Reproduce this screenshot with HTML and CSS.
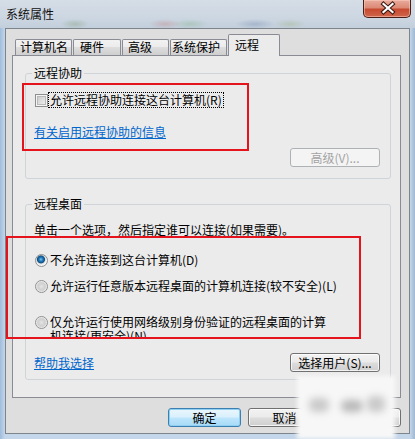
FILE: index.html
```html
<!DOCTYPE html>
<html lang="zh-CN">
<head>
<meta charset="utf-8">
<title>系统属性</title>
<link rel="stylesheet" href="styles.css">
</head>
<body>
<div class="window">
  <div class="titlebar">
    <span class="title">系统属性</span>
    <span class="close">
      <svg width="48" height="18" viewBox="0 0 48 18">
        <path d="M20.5 5 L29.5 13 M29.5 5 L20.5 13" stroke="#3b1610" stroke-width="4.2" stroke-linecap="square" fill="none"/>
        <path d="M20.5 5 L29.5 13 M29.5 5 L20.5 13" stroke="#ffffff" stroke-width="2.2" stroke-linecap="square" fill="none"/>
      </svg>
    </span>
  </div>
  <div class="dialog">
    <div class="tabs">
      <div class="tab t1">计算机名</div>
      <div class="tab t2">硬件</div>
      <div class="tab t3">高级</div>
      <div class="tab t4">系统保护</div>
      <div class="tab active">远程</div>
    </div>
    <div class="panel">
      <fieldset class="group g1">
        <legend>远程协助</legend>
        <div class="check-row"><span class="checkbox"></span><span class="focus">允许远程协助连接这台计算机(R)</span></div>
        <a class="link info-link">有关启用远程协助的信息</a>
        <div class="btn-row"><span class="btn wide disabled">高级(V)...</span></div>
      </fieldset>
      <fieldset class="group g2">
        <legend>远程桌面</legend>
        <p class="hint">单击一个选项，然后指定谁可以连接(如果需要)。</p>
        <div class="radio-row r1"><span class="radio checked"></span><span>不允许连接到这台计算机(D)</span></div>
        <div class="radio-row r2"><span class="radio"></span><span>允许运行任意版本远程桌面的计算机连接(较不安全)(L)</span></div>
        <div class="radio-row r3"><span class="radio"></span><span class="multi">仅允许运行使用网络级别身份验证的远程桌面的计算机连接(更安全)(N)</span></div>
        <div class="btn-row split"><a class="link">帮助我选择</a><span class="btn wide">选择用户(S)...</span></div>
      </fieldset>
    </div>
    <div class="footer">
      <span class="btn default">确定</span>
      <span class="btn cancel">取消</span>
      <span class="btn">应用(A)</span>
    </div>
  </div>
  <div class="highlight h1"></div>
  <div class="highlight h2"></div>
  <div class="watermark"><span class="blob b1"></span><span class="blob b2"></span><span class="blob b3"></span></div>
</div>
</body>
</html>
```
FILE: styles.css
```css
* { box-sizing: border-box; }
html, body { margin: 0; padding: 0; }
body {
  width: 415px;
  height: 439px;
  overflow: hidden;
  font-family: "Noto Sans CJK SC", "Noto Sans", sans-serif;
  font-size: 12px;
  line-height: 14px;
  color: #000;
  background: #b3c9e2;
}
.window {
  position: relative;
  width: 415px;
  height: 439px;
  display: flex;
  flex-direction: column;
  background: linear-gradient(90deg, #9fbcdc 0, #c4d6ea 5px, #c4d6ea 410px, #9fb7d2 415px);
}
.titlebar {
  height: 28px;
  display: flex;
  justify-content: space-between;
  align-items: flex-start;
  padding-left: 6px;
  background:
    radial-gradient(ellipse 14px 5px at 75px 24px, rgba(120,150,110,.35), transparent),
    radial-gradient(ellipse 16px 5px at 165px 24px, rgba(190,110,110,.3), transparent),
    radial-gradient(ellipse 18px 5px at 190px 24px, rgba(120,170,120,.3), transparent),
    radial-gradient(ellipse 20px 5px at 255px 24px, rgba(110,130,170,.35), transparent),
    radial-gradient(ellipse 16px 5px at 290px 24px, rgba(150,170,110,.3), transparent),
    linear-gradient(180deg, #d5dde6 0, #cdd7e2 60%, #c2cfdc 100%);
}
.title { margin-top: 7px; color: #111; }
.close {
  display: block;
  width: 48px;
  height: 18px;
  margin-right: 4px;
  border: 1px solid #4a1d15;
  border-top: none;
  border-radius: 0 0 5px 5px;
  background: linear-gradient(180deg, #e9ab9c 0, #dc8a76 45%, #c64a30 55%, #d0664c 100%);
  box-shadow: inset 0 0 0 1px rgba(255,210,200,.5);
}
.close svg { display: block; margin: -1px 0 0 -1px; }
.dialog {
  margin: 0 5px 5px 5px;
  height: 406px;
  border: 1px solid #7e848b;
  background: #dedede;
  display: flex;
  flex-direction: column;
}
.tabs {
  display: flex;
  align-items: flex-end;
  gap: 1px;
  padding: 5px 0 0 9px;
  height: 26px;
  position: relative;
  z-index: 2;
}
.tab {
  height: 16px;
  border: 1px solid #898c95;
  border-bottom: none;
  border-radius: 2px 2px 0 0;
  background: linear-gradient(180deg, #f2f2f2 0, #ebebeb 50%, #dddddd 50%, #cfcfcf 100%);
  padding-left: 4px;
  white-space: nowrap;
}
.t1 { width: 57px; }
.t2 { width: 48px; padding-left: 6px; }
.t3 { width: 47px; padding-left: 5px; }
.t4 { width: 57px; padding-left: 1px; }
.tab.active {
  width: 52px;
  height: 22px;
  margin-bottom: -1px;
  padding: 3px 0 0 6px;
  background: #ebebeb;
}
.panel {
  height: 343px;
  margin: 0 8px 0 6px;
  border: 1px solid #898c95;
  background: #ebebeb;
}
.group {
  width: 366px;
  margin: 10px 0 0 12px;
  padding: 0 10px 11px 8px;
  border: 1px solid #cfd4d8;
  border-radius: 3px;
  min-width: 0;
}
.group legend {
  margin-left: -2px;
  padding: 0 2px;
  line-height: 14px;
}
.g2 { margin-top: 18px; padding-bottom: 7px; }
.check-row {
  display: flex;
  align-items: center;
  height: 14px;
  margin-top: 13px;
}
.checkbox {
  width: 13px;
  height: 13px;
  margin: 0 1px 0 1px;
  border: 1px solid #8e8f8f;
  background: linear-gradient(135deg, #c4c4c4 0, #e2e2e2 60%, #f3f3f3 100%);
  box-shadow: inset 0 0 0 1px #f4f4f4, inset 0 0 0 2px #b9b9b9;
}
.focus {
  outline: 1px dotted #000;
  outline-offset: 0;
  padding: 0 1px;
  line-height: 14px;
}
.link {
  display: block;
  width: fit-content;
  color: #0066cc;
  text-decoration: underline;
  cursor: pointer;
}
.info-link { margin-top: 18px; }
.btn-row {
  display: flex;
  justify-content: flex-end;
  align-items: center;
  margin-top: 9px;
}
.btn-row.split { justify-content: space-between; margin-top: 15px; }
.btn {
  display: flex;
  align-items: center;
  justify-content: center;
  width: 73px;
  height: 19px;
  border: 1px solid #707070;
  border-radius: 3px;
  background: linear-gradient(180deg, #f2f2f2 0, #ebebeb 48%, #dddddd 52%, #cfcfcf 100%);
  box-shadow: inset 0 0 0 1px rgba(255,255,255,.75);
  white-space: nowrap;
}
.btn.wide { width: 90px; }
.btn.disabled {
  color: #a3a3a3;
  border-color: #adb2b5;
  background: #f4f4f4;
  box-shadow: none;
}
.btn.default {
  border-color: #3c7fb1;
  background: linear-gradient(180deg, #eaf6fd 0, #d9f0fc 48%, #bee6fd 52%, #a7d9f5 100%);
  box-shadow: inset 0 0 0 1px #8fd0f2;
}
.hint { margin: 12px 0 0 0; }
.radio-row {
  display: flex;
  align-items: center;
  height: 14px;
}
.r1 { margin-top: 16px; }
.r2 { margin-top: 12px; }
.r3 {
  margin-top: 22px;
  align-items: flex-start;
  height: 23px;
  overflow: hidden;
}
.radio {
  flex: none;
  width: 13px;
  height: 13px;
  margin: 0 2px 0 1px;
  border: 1px solid #8e8f8f;
  border-radius: 50%;
  background: radial-gradient(circle at 50% 50%, #e4e4e4 0, #cfcfcf 3.5px, #d8d8d8 4.5px, #f5f5f5 5.5px);
}
.radio.checked {
  background: radial-gradient(circle at 45% 40%, #7cc7ee 0, #1f76b5 2px, #0f4f86 3.6px, #d9d9d9 4.4px, #f5f5f5 5.5px);
}
.r3 .radio { margin-top: 1px; }
.multi { width: 278px; line-height: 14px; }
.footer {
  display: flex;
  justify-content: flex-end;
  gap: 7px;
  margin-top: 10px;
  padding-right: 8px;
}
.highlight {
  position: absolute;
  border: 2px solid #e5141c;
  z-index: 5;
}
.h1 { left: 22px; top: 83px; width: 227px; height: 68px; }
.h2 { left: 6px; top: 236px; width: 355px; height: 103px; }
.watermark {
  position: absolute;
  left: 297px;
  top: 376px;
  width: 98px;
  height: 63px;
  background: #f7f7f7;
  filter: blur(2px);
  z-index: 4;
}
.blob {
  position: absolute;
  background: #c9c9c9;
  border-radius: 6px;
  filter: blur(3px);
}
.b1 { left: 12px; top: 22px; width: 20px; height: 14px; }
.b2 { left: 44px; top: 24px; width: 22px; height: 12px; background: #b8b8b8; }
.b3 { left: 70px; top: 20px; width: 18px; height: 16px; }
```
